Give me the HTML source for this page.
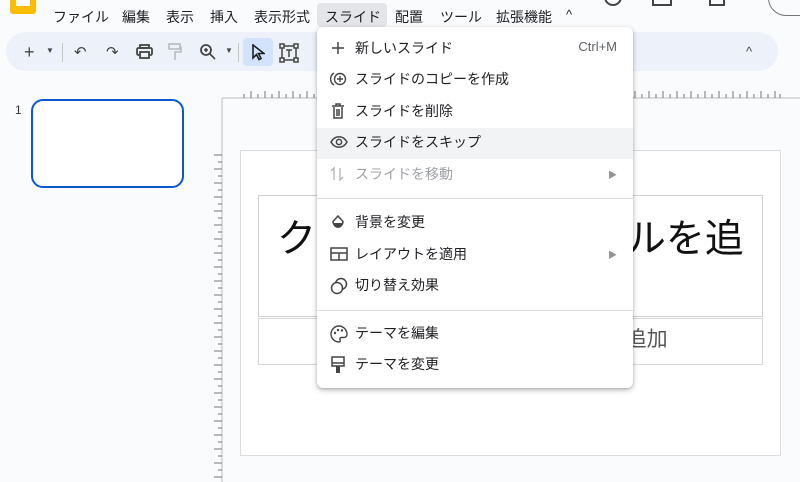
<!DOCTYPE html>
<html><head><meta charset="utf-8"><style>
*{box-sizing:border-box;margin:0;padding:0}
body{width:800px;height:482px;overflow:hidden;background:#f9fbfd;font-family:"Liberation Sans","Noto Sans CJK JP",sans-serif;color:#1f1f1f;position:relative}
.abs{position:absolute}
.menubar span{position:absolute;top:7px;font-size:14px;color:#202124}
.tb{position:absolute;left:6px;top:32px;width:772px;height:39px;background:#edf2fa;border-radius:20px}
.ic{position:absolute;font-size:15px;color:#444746}
.menu{position:absolute;left:317px;top:27px;width:316px;height:361px;background:#fff;border-radius:6px;box-shadow:0 2px 6px rgba(0,0,0,.25),0 1px 2px rgba(0,0,0,.15)}
.it{position:absolute;left:0;width:316px;height:30px;font-size:14px;color:#202124}
.it .t{position:absolute;left:38px;top:5px}
.it svg{position:absolute;left:13px;top:7px}
.dis{color:#a0a3a7}
.sep{position:absolute;left:0;width:316px;height:1px;background:#dadce0}
.arr{position:absolute;right:16px;top:9px;font-size:9px;color:#8f9296}
</style></head><body>
<div class="abs" style="left:10px;top:-10px;width:26px;height:24px;background:#fbbc04;border-radius:3px"><div style="position:absolute;left:6px;top:4px;width:14px;height:12px;background:#fff;border-radius:1px"></div></div>
<div class="menubar">
<span style="left:53px">ファイル</span><span style="left:122px">編集</span><span style="left:166px">表示</span><span style="left:210px">挿入</span><span style="left:254px">表示形式</span>
<div class="abs" style="left:317px;top:3px;width:70px;height:24px;background:#e3e5e8;border-radius:4px"></div>
<span style="left:325px">スライド</span><span style="left:395px">配置</span><span style="left:440px">ツール</span><span style="left:496px">拡張機能</span><span style="left:566px;font-size:13px">^</span>
</div>
<div class="abs" style="left:604px;top:-12px;width:18px;height:18px;border:2px solid #444;border-radius:50%"></div>
<div class="abs" style="left:652px;top:-8px;width:20px;height:14px;border:2px solid #444;border-top:none"></div>
<div class="abs" style="left:709px;top:-8px;width:16px;height:14px;border:2px solid #444;border-top:none"></div>
<div class="abs" style="left:768px;top:-20px;width:50px;height:36px;border:1px solid #777;border-radius:18px"></div>
<div class="tb"></div>
<div class="ic" style="left:24px;top:42px;font-size:18px">+</div>
<div class="ic" style="left:46px;top:46px;font-size:8px">▼</div>
<div class="abs" style="left:62px;top:43px;width:1px;height:19px;background:#c4c7c5"></div>
<div class="ic" style="left:74px;top:43px">↶</div>
<div class="ic" style="left:106px;top:43px">↷</div>
<svg class="abs" style="left:136px;top:44px" width="17" height="15"><rect x="4" y="1" width="9" height="3" fill="none" stroke="#444" stroke-width="1.8"/><rect x="1" y="4" width="15" height="7" rx="1.5" fill="none" stroke="#444" stroke-width="1.8"/><rect x="4" y="8" width="9" height="6" fill="#edf2fa" stroke="#444" stroke-width="1.8"/></svg>
<svg class="abs" style="left:168px;top:43px" width="14" height="18"><rect x="1" y="1" width="11" height="5" fill="none" stroke="#b8bbbe" stroke-width="1.6"/><path d="M12 4h1v5H7v8" fill="none" stroke="#b8bbbe" stroke-width="1.6"/></svg>
<svg class="abs" style="left:199px;top:43px" width="18" height="18"><circle cx="7" cy="7" r="5" fill="none" stroke="#444" stroke-width="1.8"/><path d="M11 11l5 5M5 7h4M7 5v4" stroke="#444" stroke-width="1.6"/></svg>
<div class="ic" style="left:225px;top:46px;font-size:8px">▼</div>
<div class="abs" style="left:238px;top:43px;width:1px;height:19px;background:#c4c7c5"></div>
<div class="abs" style="left:243px;top:38px;width:30px;height:28px;background:#d3e3fd;border-radius:4px"></div>
<svg class="abs" style="left:251px;top:44px" width="14" height="17"><path d="M2 1v13l3.5-3.5 2.5 5 2-1-2.5-5H13z" fill="none" stroke="#1f1f1f" stroke-width="1.6"/></svg>
<svg class="abs" style="left:279px;top:43px" width="20" height="20"><rect x="3" y="3" width="14" height="14" fill="none" stroke="#444" stroke-width="1.5"/><rect x="1" y="1" width="4" height="4" fill="#edf2fa" stroke="#444" stroke-width="1.5"/><rect x="15" y="1" width="4" height="4" fill="#edf2fa" stroke="#444" stroke-width="1.5"/><rect x="1" y="15" width="4" height="4" fill="#edf2fa" stroke="#444" stroke-width="1.5"/><rect x="15" y="15" width="4" height="4" fill="#edf2fa" stroke="#444" stroke-width="1.5"/><path d="M7 7h6M10 7v7" stroke="#444" stroke-width="1.5"/></svg>
<div class="ic" style="left:746px;top:44px;font-size:13px">^</div>
<div class="abs" style="left:15px;top:103px;font-size:12px;color:#333">1</div>
<div class="abs" style="left:31px;top:99px;width:153px;height:89px;border:2.5px solid #0b57d0;border-radius:12px;background:#fff"></div>
<svg class="abs" style="left:214px;top:88px" width="586" height="394">
<path d="M8 10V394M8 10H586" stroke="#d0d2d5" stroke-width="1.5" fill="none"/>
<g stroke="#777" stroke-width="1">
<path d="M30 10v-4M37 10v-7M44 10v-4M51 10v-7M58 10v-4M65 10v-7M72 10v-4M79 10v-7M86 10v-4M93 10v-7M100 10v-4M107 10v-7M114 10v-4M121 10v-7M128 10v-4M135 10v-7M142 10v-4M149 10v-7M156 10v-4M163 10v-7M170 10v-4M177 10v-7M184 10v-4M191 10v-7M198 10v-4M205 10v-7"/>
<path d="M400 10v-4M407 10v-7M414 10v-4M421 10v-7M428 10v-4M435 10v-7M442 10v-4M449 10v-7M456 10v-4M463 10v-7M470 10v-4M477 10v-7M484 10v-4M491 10v-7M498 10v-4M505 10v-7M512 10v-4M519 10v-7M526 10v-4M533 10v-7M540 10v-4M547 10v-7M554 10v-4M561 10v-7M566 10v-4"/>
<path d="M0 67h8M4 74h4M0 81h8M4 88h4M0 95h8M4 102h4M0 109h8M4 116h4M0 123h8M4 130h4M0 137h8M4 144h4M0 151h8M4 158h4M0 165h8M4 172h4M0 179h8M4 186h4M0 193h8M4 200h4M0 207h8M4 214h4M0 221h8M4 228h4M0 235h8M4 242h4M0 249h8M4 256h4M0 263h8M4 270h4M0 277h8M4 284h4M0 291h8M4 298h4M0 305h8M4 312h4M0 319h8M4 326h4M0 333h8M4 340h4M0 347h8M4 354h4M0 361h8M4 368h4M0 375h8M4 382h4M0 389h8"/>
</g></svg>
<div class="abs" style="left:240px;top:150px;width:541px;height:306px;background:#fff;border:1px solid #dadce0"></div>
<div class="abs" style="left:258px;top:195px;width:505px;height:122px;border:1px solid #d0d0d0"></div>
<div class="abs" style="left:277px;top:196px;width:468px;height:88px;overflow:hidden;font-size:39px;color:#111;line-height:88px;white-space:nowrap">クリックしてタイトルを追加</div>
<div class="abs" style="left:258px;top:318px;width:505px;height:47px;border:1px solid #d8d8d8;font-size:21px;color:#555;text-align:center;line-height:42px;white-space:nowrap">クリックしてサブタイトルを追加</div>
<div class="menu">
<div class="it" style="top:6px"><svg width="12" height="12" style="left:15px;top:9px"><path d="M6 0v12M0 6h12" stroke="#444" stroke-width="1.5"/></svg><span class="t">新しいスライド</span><span style="position:absolute;right:16px;top:6px;font-size:13px;color:#5f6368">Ctrl+M</span></div>
<div class="it" style="top:37px"><svg width="18" height="16"><path d="M4 2a7 7 0 0 0 0 12" fill="none" stroke="#444" stroke-width="1.4"/><circle cx="10" cy="8" r="5.5" fill="none" stroke="#444" stroke-width="1.4"/><path d="M10 5v6M7 8h6" stroke="#444" stroke-width="1.4"/></svg><span class="t">スライドのコピーを作成</span></div>
<div class="it" style="top:69px"><svg width="16" height="17"><path d="M2 3h12M6 3V1h4v2M4 4v11h8V4M7 6v7M9 6v7" fill="none" stroke="#444" stroke-width="1.5"/></svg><span class="t">スライドを削除</span></div>
<div class="abs" style="left:0;top:101px;width:316px;height:31px;background:#f1f3f4"></div>
<div class="it" style="top:100px"><svg width="18" height="14" style="top:8px"><path d="M1 7c4-7 12-7 16 0c-4 7-12 7-16 0z" fill="none" stroke="#444" stroke-width="1.5"/><circle cx="9" cy="7" r="2.6" fill="none" stroke="#444" stroke-width="1.5"/></svg><span class="t">スライドをスキップ</span></div>
<div class="it dis" style="top:132px"><svg width="14" height="16"><path d="M4 14V2L1 5M10 2v12l3-3" fill="none" stroke="#b0b3b6" stroke-width="1.3"/></svg><span class="t">スライドを移動</span><span class="arr">▶</span></div>
<div class="sep" style="top:171px"></div>
<div class="it" style="top:180px"><svg width="16" height="16"><path d="M8 2l-5 5.5a5 5 0 1 0 10 0z" fill="none" stroke="#444" stroke-width="1.5"/><path d="M3 9h10a5 5 0 0 1-10 0z" fill="#444"/></svg><span class="t">背景を変更</span></div>
<div class="it" style="top:212px"><svg width="18" height="16"><rect x="1" y="2" width="16" height="12" fill="none" stroke="#444" stroke-width="1.5"/><path d="M1 7h16M9 7v7" stroke="#444" stroke-width="1.5"/></svg><span class="t">レイアウトを適用</span><span class="arr">▶</span></div>
<div class="it" style="top:243px"><svg width="18" height="18"><circle cx="11" cy="7" r="5.5" fill="none" stroke="#444" stroke-width="1.5"/><circle cx="7" cy="11" r="5.5" fill="#fff" stroke="#444" stroke-width="1.5"/></svg><span class="t">切り替え効果</span></div>
<div class="sep" style="top:283px"></div>
<div class="it" style="top:291px"><svg width="18" height="18"><path d="M9 1a8 8 0 0 0 0 16c1.5 0 1.5-1.5 1-2.5-.6-1 .2-2 1.2-2H14a3 3 0 0 0 3-3c0-5-4-8.5-8-8.5z" fill="none" stroke="#444" stroke-width="1.4"/><circle cx="5" cy="8" r="1.2" fill="#444"/><circle cx="8" cy="5" r="1.2" fill="#444"/><circle cx="12" cy="5.5" r="1.2" fill="#444"/></svg><span class="t">テーマを編集</span></div>
<div class="it" style="top:322px"><svg width="16" height="18"><rect x="2" y="1" width="12" height="9" fill="none" stroke="#444" stroke-width="1.5"/><path d="M2 7h12" stroke="#444" stroke-width="1.5"/><rect x="6" y="10" width="4" height="7" fill="#444"/></svg><span class="t">テーマを変更</span></div>
</div>
</body></html>
